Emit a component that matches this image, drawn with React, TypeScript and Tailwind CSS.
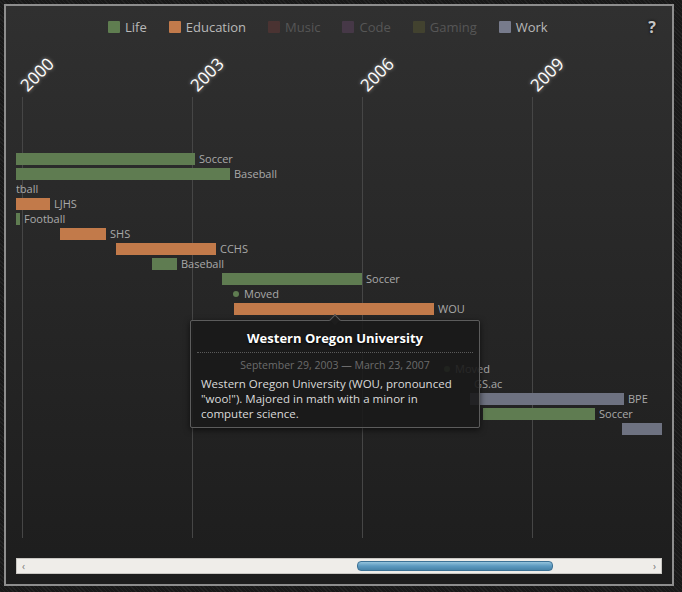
import React from 'react';

type Kind = 'life' | 'education' | 'work';

const barColor: Record<Kind, string> = {
  life: 'bg-[#5f7c51]',
  education: 'bg-[#c27a4a]',
  work: 'bg-[#6e7281]',
};

// page coordinates, converted to the viewport (origin x=16, y=48)
const OX = 16;
const OY = 48;

type Row = { y: number; x1?: number; x2?: number; dot?: number; kind: Kind; label: string; labelX?: number };

const rows: Row[] = [
  { y: 159, x1: 16, x2: 195, kind: 'life', label: 'Soccer' },
  { y: 174, x1: 16, x2: 230, kind: 'life', label: 'Baseball' },
  { y: 189, kind: 'life', label: 'Football', labelX: -3 },
  { y: 204, x1: 16, x2: 50, kind: 'education', label: 'LJHS' },
  { y: 219, x1: 16, x2: 20, kind: 'life', label: 'Football' },
  { y: 234, x1: 60, x2: 106, kind: 'education', label: 'SHS' },
  { y: 249, x1: 116, x2: 216, kind: 'education', label: 'CCHS' },
  { y: 264, x1: 152, x2: 177, kind: 'life', label: 'Baseball' },
  { y: 279, x1: 222, x2: 362, kind: 'life', label: 'Soccer' },
  { y: 294, dot: 236, kind: 'life', label: 'Moved' },
  { y: 309, x1: 234, x2: 434, kind: 'education', label: 'WOU' },
  { y: 369, dot: 447, kind: 'life', label: 'Moved' },
  { y: 384, kind: 'work', label: 'GS.ac', labelX: 474 },
  { y: 399, x1: 470, x2: 624, kind: 'work', label: 'BPE' },
  { y: 414, x1: 483, x2: 595, kind: 'life', label: 'Soccer' },
  { y: 429, x1: 622, x2: 680, kind: 'work', label: '' },
];

const years = [
  { label: '2000', x: 22 },
  { label: '2003', x: 192 },
  { label: '2006', x: 362 },
  { label: '2009', x: 532 },
];

const legend = [
  { name: 'Life', sq: 'bg-[#5f7d50]', text: 'text-[#b9b9b9]' },
  { name: 'Education', sq: 'bg-[#c27a4b]', text: 'text-[#b9b9b9]' },
  { name: 'Music', sq: 'bg-[#4a3332]', text: 'text-[#565656]' },
  { name: 'Code', sq: 'bg-[#463847]', text: 'text-[#565656]' },
  { name: 'Gaming', sq: 'bg-[#42422f]', text: 'text-[#565656]' },
  { name: 'Work', sq: 'bg-[#777b8c]', text: 'text-[#b9b9b9]' },
];

// scroll thumb, in px within the track
const thumbLeft = 329;
const thumbWidth = 196;

const App: React.FC = () => {
  return (
    <div
      className="relative w-[682px] h-[592px] p-[4px] bg-[#1b1b1b] bg-[repeating-linear-gradient(45deg,#232323_0px,#232323_1px,#191919_1px,#191919_3px)] overflow-hidden"
      style={{ fontFamily: '"Open Sans", "Noto Sans", sans-serif' }}
    >
      <div className="h-[582px] w-[670px] border-2 border-[#8d8d8d] bg-linear-to-b from-[#303030] to-[#1d1d1d] flex flex-col">
        {/* legend */}
        <div className="h-[42px] flex items-center pl-[102px] pr-[16px] shrink-0">
          <div className="flex items-center gap-[22px]">
            {legend.map(l => (
              <div key={l.name} className="flex items-center gap-[5px]">
                <span className={`w-[12px] h-[12px] rounded-[1px] ${l.sq}`} />
                <span className={`text-[13px] leading-none ${l.text}`}>{l.name}</span>
              </div>
            ))}
          </div>
          <span className="ml-auto text-[16px] font-bold text-[#c4c4c4] leading-none [text-shadow:0_0_3px_rgba(0,0,0,0.9)]">?</span>
        </div>

        {/* timeline viewport */}
        <div className="relative mx-[10px] h-[504px] overflow-hidden shrink-0">
          {years.map(y => (
            <React.Fragment key={y.label}>
              <div
                className="absolute w-px bg-[#464646]"
                style={{ left: y.x - OX, top: 97 - OY, height: 441 }}
              />
              <div className="absolute w-0 h-0" style={{ left: y.x - OX + 7, top: 94 - OY }}>
                <span className="absolute left-0 bottom-0 origin-bottom-left -rotate-45 whitespace-nowrap text-[17px] leading-none text-white [text-shadow:0_0_4px_rgba(255,255,255,0.55)]">
                  {y.label}
                </span>
              </div>
            </React.Fragment>
          ))}

          {rows.map((r, i) => {
            const top = r.y - OY;
            let labelLeft = r.labelX ?? 0;
            if (r.labelX === undefined) {
              if (r.x2 !== undefined) labelLeft = r.x2 + 4;
              else if (r.dot !== undefined) labelLeft = r.dot + 8;
            }
            return (
              <React.Fragment key={i}>
                {r.x1 !== undefined && r.x2 !== undefined && (
                  <div
                    className={`absolute h-[12px] ${barColor[r.kind]}`}
                    style={{ left: r.x1 - OX, top: top - 6, width: r.x2 - r.x1 }}
                  />
                )}
                {r.dot !== undefined && (
                  <div
                    className={`absolute w-[6px] h-[6px] rounded-full ${barColor[r.kind]}`}
                    style={{ left: r.dot - OX - 3, top: top - 3 }}
                  />
                )}
                {r.label && (
                  <span
                    className="absolute text-[11px] leading-[14px] text-[#a9a9a9] whitespace-nowrap"
                    style={{ left: labelLeft - OX, top: top - 7 }}
                  >
                    {r.label}
                  </span>
                )}
              </React.Fragment>
            );
          })}
        </div>

        {/* scrollbar */}
        <div className="mx-[10px] mt-[6px] h-[16px] shrink-0 bg-[#efede9] border border-[#c9c7c3] flex items-center px-[5px] text-[#777] text-[10px] leading-none">
          <span className="w-[6px]">‹</span>
          <div className="relative flex-1 h-full">
            <div
              className="absolute top-[2px] h-[10px] rounded-[4px] border border-[#3d7296] bg-linear-to-b from-[#93c3dc] via-[#5d9ac0] to-[#4883a8]"
              style={{ left: thumbLeft, width: thumbWidth }}
            />
          </div>
          <span className="w-[6px] text-right">›</span>
        </div>
      </div>

      {/* tooltip */}
      <div className="absolute left-[190px] top-[320px] w-[290px] h-[108px] bg-[rgba(26,26,26,0.9)] border border-[#5c5c5c] rounded-[2px] shadow-[0_2px_6px_rgba(0,0,0,0.6)]">
        <div className="absolute left-[140px] -top-[5px] w-[8px] h-[8px] rotate-45 bg-[#1d1d1d] border-l border-t border-[#5c5c5c]" />
        <div className="pt-[8px] h-[26px] text-center text-[13px] font-bold leading-[18px] text-white [text-shadow:0_1px_2px_rgba(0,0,0,1)]">
          Western Oregon University
        </div>
        <div className="mx-[6px] mt-[5px] border-b border-dotted border-[#5a5a5a]" />
        <div className="mt-[4px] text-center text-[10.5px] leading-[16px] text-[#6c6c6c]">
          September 29, 2003 — March 23, 2007
        </div>
        <div className="mt-[3px] px-[10px] text-[11.5px] leading-[15px] text-[#dadada] whitespace-nowrap">
          Western Oregon University (WOU, pronounced
          <br />
          "woo!"). Majored in math with a minor in
          <br />
          computer science.
        </div>
      </div>
    </div>
  );
};

export default App;
